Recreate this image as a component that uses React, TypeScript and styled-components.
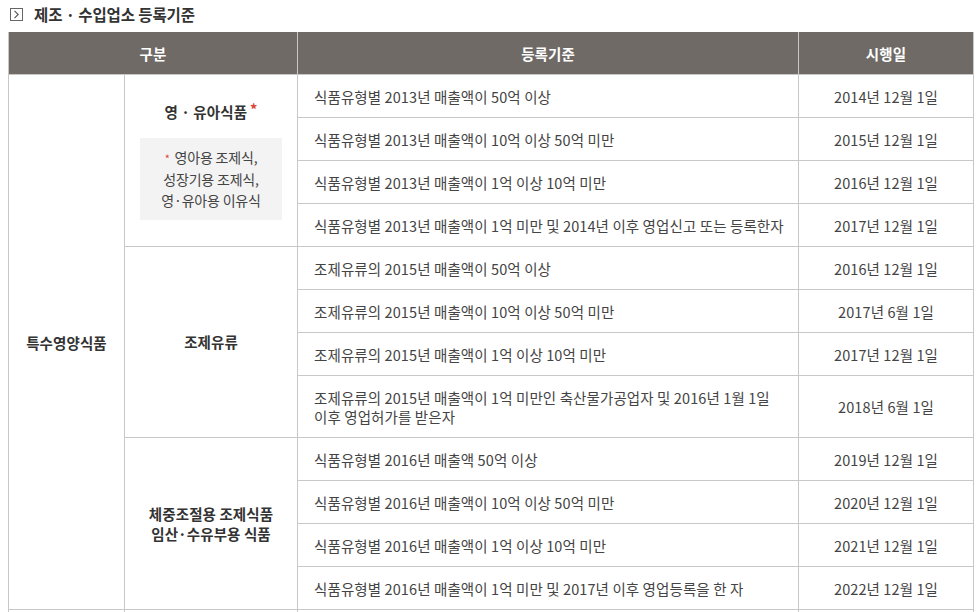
import React from 'react';
import styled, { createGlobalStyle } from 'styled-components';

const GlobalStyle = createGlobalStyle`
  html, body {
    margin: 0;
    padding: 0;
    background: #ffffff;
  }
  body {
    font-family: 'Noto Sans CJK KR', 'Noto Sans', sans-serif;
    color: #444;
  }
`;

const Page = styled.div`
  padding: 0 8px;
  width: 965px;
`;

const TitleRow = styled.h3`
  display: flex;
  align-items: center;
  gap: 11px;
  height: 28px;
  margin: 0 0 4px 2px;
  font-size: 15.5px;
  font-weight: 700;
  color: #333;
  letter-spacing: -0.1px;
`;

const TitleIcon = styled.span`
  display: inline-flex;
  align-items: center;
  justify-content: center;
  width: 13px;
  height: 13px;
  border: 1px solid #666;
  box-sizing: border-box;
`;

const Table = styled.table`
  width: 965px;
  border-collapse: collapse;
  table-layout: fixed;
  font-size: 14.5px;
  letter-spacing: 0.1px;
`;

const Th = styled.th`
  height: 42px;
  padding: 0;
  background: #6f6a66;
  color: #fff;
  font-weight: 700;
  font-size: 14.5px;
  text-align: center;
  border-left: 1px solid #c8c8c8;
  border-right: 1px solid #c8c8c8;
`;

const Td = styled.td<{ $align?: 'left' | 'center'; $bold?: boolean }>`
  padding: 11.5px 16px;
  line-height: 19px;
  border: 1px solid #c8c8c8;
  text-align: ${(p) => p.$align || 'center'};
  font-weight: ${(p) => (p.$bold ? 700 : 400)};
  color: ${(p) => (p.$bold ? '#333' : '#444')};
  vertical-align: middle;
`;

const TextTd = styled(Td)`
  padding-right: 4px;
  white-space: nowrap;
`;

const GroupTitle = styled.div`
  font-weight: 700;
  color: #333;
  line-height: 20px;
`;

const Star = styled.span`
  color: #d9473a;
  font-weight: 700;
  margin-left: 3px;
  position: relative;
  top: -3px;
`;

const NoteBox = styled.div`
  margin: 16px -1px 0;
  padding: 9px 4px;
  background: #f3f3f3;
  font-weight: 400;
  color: #444;
  font-size: 14px;
  line-height: 21px;
  letter-spacing: -0.2px;
`;

const NoteStar = styled.span`
  color: #d9473a;
  font-size: 11px;
  margin-right: 5px;
`;

type Row = { text: React.ReactNode; date: string };
type Group = { label: React.ReactNode; rows: Row[] };

const groups: Group[] = [
  {
    label: (
      <>
        <GroupTitle>
          영 · 유아식품<Star>*</Star>
        </GroupTitle>
        <NoteBox>
          <NoteStar>*</NoteStar>영아용 조제식,
          <br />
          성장기용 조제식,
          <br />
          영·유아용 이유식
        </NoteBox>
      </>
    ),
    rows: [
      { text: '식품유형별 2013년 매출액이 50억 이상', date: '2014년 12월 1일' },
      { text: '식품유형별 2013년 매출액이 10억 이상 50억 미만', date: '2015년 12월 1일' },
      { text: '식품유형별 2013년 매출액이 1억 이상 10억 미만', date: '2016년 12월 1일' },
      { text: '식품유형별 2013년 매출액이 1억 미만 및 2014년 이후 영업신고 또는 등록한자', date: '2017년 12월 1일' },
    ],
  },
  {
    label: <GroupTitle>조제유류</GroupTitle>,
    rows: [
      { text: '조제유류의 2015년 매출액이 50억 이상', date: '2016년 12월 1일' },
      { text: '조제유류의 2015년 매출액이 10억 이상 50억 미만', date: '2017년 6월 1일' },
      { text: '조제유류의 2015년 매출액이 1억 이상 10억 미만', date: '2017년 12월 1일' },
      {
        text: (
          <>
            조제유류의 2015년 매출액이 1억 미만인 축산물가공업자 및 2016년 1월 1일
            <br />
            이후 영업허가를 받은자
          </>
        ),
        date: '2018년 6월 1일',
      },
    ],
  },
  {
    label: (
      <GroupTitle>
        체중조절용 조제식품
        <br />
        임산·수유부용 식품
      </GroupTitle>
    ),
    rows: [
      { text: '식품유형별 2016년 매출액 50억 이상', date: '2019년 12월 1일' },
      { text: '식품유형별 2016년 매출액이 10억 이상 50억 미만', date: '2020년 12월 1일' },
      { text: '식품유형별 2016년 매출액이 1억 이상 10억 미만', date: '2021년 12월 1일' },
      { text: '식품유형별 2016년 매출액이 1억 미만 및 2017년 이후 영업등록을 한 자', date: '2022년 12월 1일' },
    ],
  },
];

const totalRows = groups.reduce((n, g) => n + g.rows.length, 0);

const App = () => {
  return (
    <Page>
      <GlobalStyle />
      <TitleRow>
        <TitleIcon>
          <svg width="7" height="9" viewBox="0 0 7 9">
            <path d="M1.5 0.8 L5.2 4.5 L1.5 8.2" fill="none" stroke="#555" strokeWidth="1.1" />
          </svg>
        </TitleIcon>
        제조 · 수입업소 등록기준
      </TitleRow>
      <Table>
        <colgroup>
          <col style={{ width: 116 }} />
          <col style={{ width: 173 }} />
          <col style={{ width: 501 }} />
          <col style={{ width: 175 }} />
        </colgroup>
        <thead>
          <tr>
            <Th colSpan={2}>구분</Th>
            <Th>등록기준</Th>
            <Th>시행일</Th>
          </tr>
        </thead>
        <tbody>
          {groups.map((g, gi) =>
            g.rows.map((r, ri) => (
              <tr key={`${gi}-${ri}`}>
                {gi === 0 && ri === 0 && (
                  <Td rowSpan={totalRows} $bold>
                    특수영양식품
                  </Td>
                )}
                {ri === 0 && (
                  <Td rowSpan={g.rows.length} $bold>
                    {g.label}
                  </Td>
                )}
                <TextTd $align="left">{r.text}</TextTd>
                <Td>{r.date}</Td>
              </tr>
            ))
          )}
          <tr>
            <Td $bold>건강기능식품</Td>
            <Td $bold>-</Td>
            <TextTd $align="left">2016년 이후 영업신고 또는 등록한 자</TextTd>
            <Td>2017년 12월 1일</Td>
          </tr>
        </tbody>
      </Table>
    </Page>
  );
};

export default App;
